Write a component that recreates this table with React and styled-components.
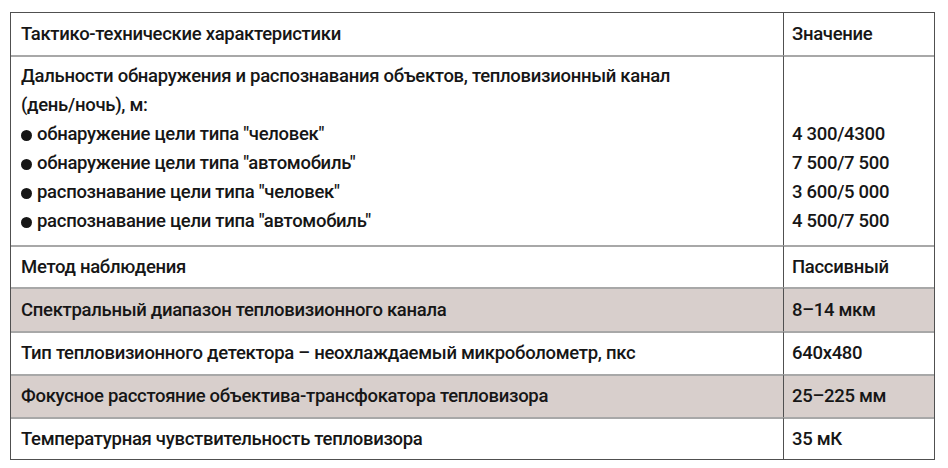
import React from "react";
import styled, { createGlobalStyle } from "styled-components";

const GlobalStyle = createGlobalStyle`
  html, body {
    margin: 0;
    padding: 0;
    background: #ffffff;
  }
  body {
    font-family: "Roboto", "Liberation Sans", sans-serif;
    color: #161616;
  }
`;

const Page = styled.div`
  padding: 12px 0 0 10px;
`;

const Table = styled.div`
  width: 925px;
  display: grid;
  grid-template-columns: 772px 1fr;
  border: 1px solid #505050;
  box-sizing: border-box;
`;

const Cell = styled.div`
  background: ${(p) => (p.$shaded ? "#d8cfcc" : "#ffffff")};
  height: ${(p) => p.$h}px;
  box-sizing: border-box;
  padding: ${(p) => (p.$top ? "5px" : "0")} 0 0 ${(p) => (p.$value ? "8px" : "10px")};
  display: flex;
  flex-direction: column;
  justify-content: ${(p) => (p.$top ? "flex-start" : "center")};
  border-left: ${(p) => (p.$value ? "1px solid #505050" : "none")};
  border-top: ${(p) => (p.$first ? "none" : "2px solid #a8a8a8")};
  font-size: 18.5px;
  font-weight: 500;
  letter-spacing: -0.3px;
  line-height: 29px;
  white-space: nowrap;
`;

const Line = styled.div`
  height: 29px;
`;

const Bullet = styled.span`
  display: inline-block;
  width: 11px;
  height: 11px;
  border-radius: 50%;
  background: #161616;
  margin-right: 5px;
  vertical-align: -1px;
`;

const ranges = [
  ["обнаружение цели типа \"человек\"", "4 300/4300"],
  ["обнаружение цели типа \"автомобиль\"", "7 500/7 500"],
  ["распознавание цели типа \"человек\"", "3 600/5 000"],
  ["распознавание цели типа \"автомобиль\"", "4 500/7 500"],
];

const rows = [
  ["Метод наблюдения", "Пассивный", false, 42],
  ["Спектральный диапазон тепловизионного канала", "8–14 мкм", true, 44],
  ["Тип тепловизионного детектора – неохлаждаемый микроболометр, пкс", "640x480", false, 43],
  ["Фокусное расстояние объектива-трансфокатора тепловизора", "25–225 мм", true, 43],
  ["Температурная чувствительность тепловизора", "35 мК", false, 42],
];

export default function App() {
  return (
    <>
      <GlobalStyle />
      <Page>
        <Table>
          <Cell $first $h={42}>Тактико-технические характеристики</Cell>
          <Cell $first $value $h={42}>Значение</Cell>

          <Cell $top $h={190}>
            <Line>Дальности обнаружения и распознавания объектов, тепловизионный канал</Line>
            <Line>(день/ночь), м:</Line>
            {ranges.map(([label]) => (
              <Line key={label}>
                <Bullet />
                {label}
              </Line>
            ))}
          </Cell>
          <Cell $top $value $h={190}>
            <Line />
            <Line />
            {ranges.map(([label, value]) => (
              <Line key={label}>{value}</Line>
            ))}
          </Cell>

          {rows.map(([label, value, shaded, h]) => (
            <React.Fragment key={label}>
              <Cell $shaded={shaded} $h={h}>{label}</Cell>
              <Cell $shaded={shaded} $value $h={h}>{value}</Cell>
            </React.Fragment>
          ))}
        </Table>
      </Page>
    </>
  );
}
